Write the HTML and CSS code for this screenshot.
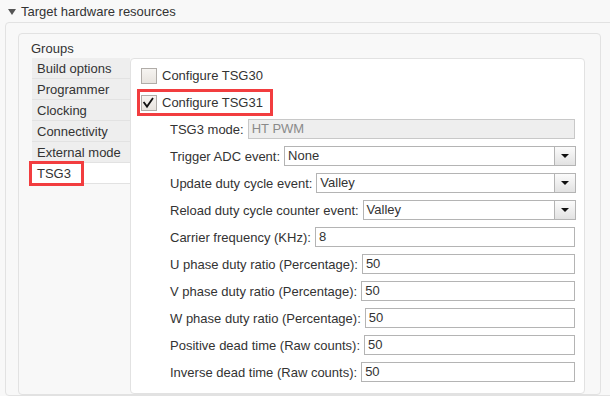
FILE: index.html
```html
<!DOCTYPE html>
<html>
  <head>
    <title>Target hardware resources</title>
    <link rel="stylesheet" href="styles.css">
  </head>
  <body>
    <!-- cabecera de la seccion -->
    <div class="section-head">
      <span class="caret"></span>
      <span>Target hardware resources</span>
    </div>
    <div class="panel">
      <div class="group-box">
        <div class="group-title">Groups</div>
        <div class="workspace">
          <!-- lista de pestañas -->
          <div class="tabs">
            <div class="tab">Build options</div>
            <div class="tab">Programmer</div>
            <div class="tab">Clocking</div>
            <div class="tab">Connectivity</div>
            <div class="tab">External mode</div>
            <div class="tab selected"><span class="callout tab-callout">TSG3</span></div>
          </div>
          <!-- contenido de la pestaña TSG3 -->
          <div class="content">
            <div class="check">
              <span class="box"></span>
              <span>Configure TSG30</span>
            </div>
            <div class="check callout">
              <span class="box">
                <svg width="16" height="16" viewBox="0 0 16 16"><polyline points="2.6,7 6,11.6 12,3" fill="none" stroke="#111" stroke-width="1.8"/></svg>
              </span>
              <span>Configure TSG31</span>
            </div>
            <div class="fields">
              <div class="field">
                <label>TSG3 mode:</label>
                <div class="input disabled">HT PWM</div>
              </div>
              <div class="field">
                <label>Trigger ADC event:</label>
                <div class="select"><span class="value">None</span><span class="drop"></span></div>
              </div>
              <div class="field">
                <label>Update duty cycle event:</label>
                <div class="select"><span class="value">Valley</span><span class="drop"></span></div>
              </div>
              <div class="field">
                <label>Reload duty cycle counter event:</label>
                <div class="select"><span class="value">Valley</span><span class="drop"></span></div>
              </div>
              <div class="field">
                <label>Carrier frequency (KHz):</label>
                <div class="input">8</div>
              </div>
              <div class="field">
                <label>U phase duty ratio (Percentage):</label>
                <div class="input">50</div>
              </div>
              <div class="field">
                <label>V phase duty ratio (Percentage):</label>
                <div class="input">50</div>
              </div>
              <div class="field">
                <label>W phase duty ratio (Percentage):</label>
                <div class="input">50</div>
              </div>
              <div class="field">
                <label>Positive dead time (Raw counts):</label>
                <div class="input">50</div>
              </div>
              <div class="field">
                <label>Inverse dead time (Raw counts):</label>
                <div class="input">50</div>
              </div>
            </div>
          </div>
        </div>
      </div>
    </div>
  </body>
</html>
```

FILE: styles.css
```css
body {
  /* estilos generales */
  margin: 0;
  height: 396px;
  overflow: hidden;
  background-color: #f8f8f8;
  font-family: "Liberation Sans", Arial, sans-serif;
  font-size: 13px;
  line-height: 15px;
  color: #333333;
}

.section-head {
  height: 22px;
  display: flex;
  align-items: center;
  gap: 5px;
  padding-left: 8px;
}

.caret {
  width: 0;
  height: 0;
  border-left: 4px solid transparent;
  border-right: 4px solid transparent;
  border-top: 6px solid #555555;
  margin-top: 1px;
}

.panel {
  margin: 0 -10px 0 5px;
  border: 1px solid #e2e2e2;
  border-radius: 4px;
  padding: 10px 0 0 12px;
}

.group-box {
  width: 583px;
  box-sizing: border-box;
  border: 1px solid #e2e2e2;
  border-radius: 4px;
  padding: 7px 15px 0 13px;
}

.group-title {
  margin-left: -1px;
  margin-bottom: 2px;
}

.workspace {
  display: flex;
}

.tabs {
  width: 98px;
}

.tab {
  height: 20px;
  line-height: 21px;
  padding-left: 5px;
  background-color: #eeeeee;
  border-bottom: 1px solid #e2e2e2;
}

.tab.selected {
  background-color: #ffffff;
}

.callout {
  outline: 3px solid #f23d3f;
}

.tab-callout {
  display: inline-block;
  height: 19px;
  line-height: 20px;
  margin-left: -5px;
  padding: 0 10px 0 5px;
}

.content {
  flex: 1;
  height: 336px;
  box-sizing: border-box;
  background-color: #ffffff;
  border: 1px solid #e2e2e2;
  border-radius: 4px;
  padding: 6px 9px 0 10px;
}

.check {
  display: flex;
  width: fit-content;
  align-items: center;
  gap: 5px;
  height: 21px;
  margin-left: -1px;
  padding: 0 7px 0 1px;
  margin-bottom: 6px;
}

.box {
  width: 16px;
  height: 16px;
  box-sizing: border-box;
  border: 1px solid #b0aca8;
  background: linear-gradient(#f6f4f1, #e8e4df);
  display: flex;
}

.box svg {
  margin: -1px;
}

.fields {
  margin-left: 29px;
}

.field {
  display: flex;
  align-items: center;
  gap: 4px;
  height: 20px;
  margin-bottom: 7px;
}

.input {
  flex: 1;
  height: 20px;
  line-height: 18px;
  box-sizing: border-box;
  border: 1px solid #b4b4b4;
  padding: 0 3px;
  background-color: #ffffff;
}

.input.disabled {
  background-color: #eeeeee;
  border-color: #c8c8c8;
  color: #8a8a8a;
}

.select {
  flex: 1;
  display: flex;
  height: 20px;
  box-sizing: border-box;
  border: 1px solid #b4b4b4;
  margin-right: -1px;
  background-color: #ffffff;
}

.select .value {
  flex: 1;
  line-height: 18px;
  padding: 0 3px;
}

.drop {
  width: 20px;
  border-left: 1px solid #b4b4b4;
  background: linear-gradient(#fbfbfb, #e2e2e2);
  display: flex;
  align-items: center;
  justify-content: center;
}

.drop::after {
  content: "";
  width: 0;
  height: 0;
  border-left: 4px solid transparent;
  border-right: 4px solid transparent;
  border-top: 4px solid #111111;
}
```
